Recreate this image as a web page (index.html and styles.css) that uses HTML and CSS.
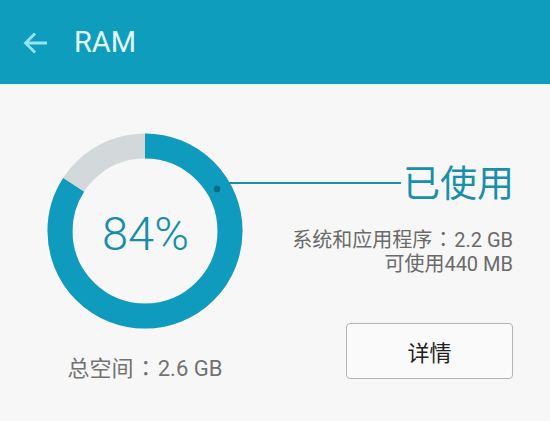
FILE: index.html
```html
<!DOCTYPE html>
<html lang="zh-CN">
<head>
<meta charset="utf-8">
<title>RAM</title>
<link rel="stylesheet" href="styles.css">
</head>
<body>
<header class="appbar">
  <svg class="back" width="26" height="26" viewBox="0 0 26 26" aria-hidden="true">
    <path d="M24 13H2.5M12 3.5L2.5 13L12 22.5" fill="none" stroke="#94e6f2" stroke-width="2.8" stroke-linecap="butt" stroke-linejoin="miter"/>
  </svg>
  <h1 class="title">RAM</h1>
</header>
<main class="content">
  <section class="left">
    <div class="ring">
      <svg width="196" height="196" viewBox="0 0 196 196" aria-hidden="true">
        <circle cx="98" cy="98" r="85" fill="none" stroke="#d3d9db" stroke-width="25"/>
        <circle cx="98" cy="98" r="85" fill="none" stroke="#0f9bbd" stroke-width="25" stroke-dasharray="448.6 534.1" transform="rotate(-90 98 98)"/>
        <circle cx="170" cy="56" r="3.2" fill="#0b6c84"/>
      </svg>
      <span class="pct">84%</span>
    </div>
    <p class="total">总空间<span class="colon" lang="zh-Hant">：</span>2.6 GB</p>
  </section>
  <section class="right">
    <div class="label-row">
      <span class="leader"></span>
      <span class="used">已使用</span>
    </div>
    <div class="details">
      <p>系统和应用程序<span class="colon" lang="zh-Hant">：</span>2.2 GB</p>
      <p>可使用440 MB</p>
    </div>
    <button class="btn" type="button">详情</button>
  </section>
</main>
</body>
</html>
```
FILE: styles.css
```css
* { box-sizing: border-box; }
html, body { margin: 0; padding: 0; }
body {
  width: 550px;
  height: 421px;
  overflow: hidden;
  background: #f7f7f7;
  font-family: Roboto, "Noto Sans CJK SC", sans-serif;
}
.appbar {
  height: 85px;
  background: #0f9dbd;
  display: flex;
  align-items: center;
  padding-left: 23px;
  border-bottom: 1px solid #e6f3f5;
}
.back { display: block; margin-top: 1px; }
.title {
  margin: 0 0 0 25px;
  font-weight: 400;
  font-size: 29px;
  color: #e3f8fb;
  line-height: 1;
}
.content {
  display: flex;
  padding-top: 48px;
}
.left {
  width: 243px;
  padding-left: 47px;
  display: flex;
  flex-direction: column;
  align-items: center;
  flex: none;
}
.ring {
  display: grid;
  width: 196px;
  height: 196px;
}
.ring > * { grid-area: 1 / 1; }
.pct {
  place-self: center;
  font-size: 47px;
  font-weight: 300;
  color: #168ea8;
  margin-top: 4px;
  margin-left: 1px;
}
.colon {
  font-family: "Noto Sans CJK TC", sans-serif;
  display: inline-block;
  width: 1.1em;
  text-align: center;
}
.total {
  margin: 24px 0 0 0;
  font-size: 22px;
  line-height: 26px;
  color: #727272;
  white-space: nowrap;
}
.right {
  flex: 1;
  margin-left: -14px;
  padding-right: 36px;
  padding-top: 30px;
  display: flex;
  flex-direction: column;
  align-items: flex-end;
}
.label-row {
  align-self: stretch;
  display: flex;
  align-items: center;
  height: 44px;
}
.leader {
  flex: 1;
  height: 2px;
  background: #1f8ea6;
  margin-top: -4px;
}
.used {
  margin-left: 2px;
  font-size: 37px;
  line-height: 44px;
  color: #1a8fa8;
}
.details {
  margin-top: 20px;
  text-align: right;
  margin-right: 1px;
}
.details p {
  margin: 0;
  font-size: 20px;
  line-height: 24px;
  color: #6a6a6a;
  white-space: nowrap;
}
.btn {
  margin-top: 47px;
  margin-right: 1px;
  width: 167px;
  height: 56px;
  border: 1.5px solid #b4b4b4;
  border-radius: 4px;
  background: #fafafa;
  font-family: Roboto, "Noto Sans CJK SC", sans-serif;
  font-size: 22px;
  color: #222;
  padding: 0;
}
```
